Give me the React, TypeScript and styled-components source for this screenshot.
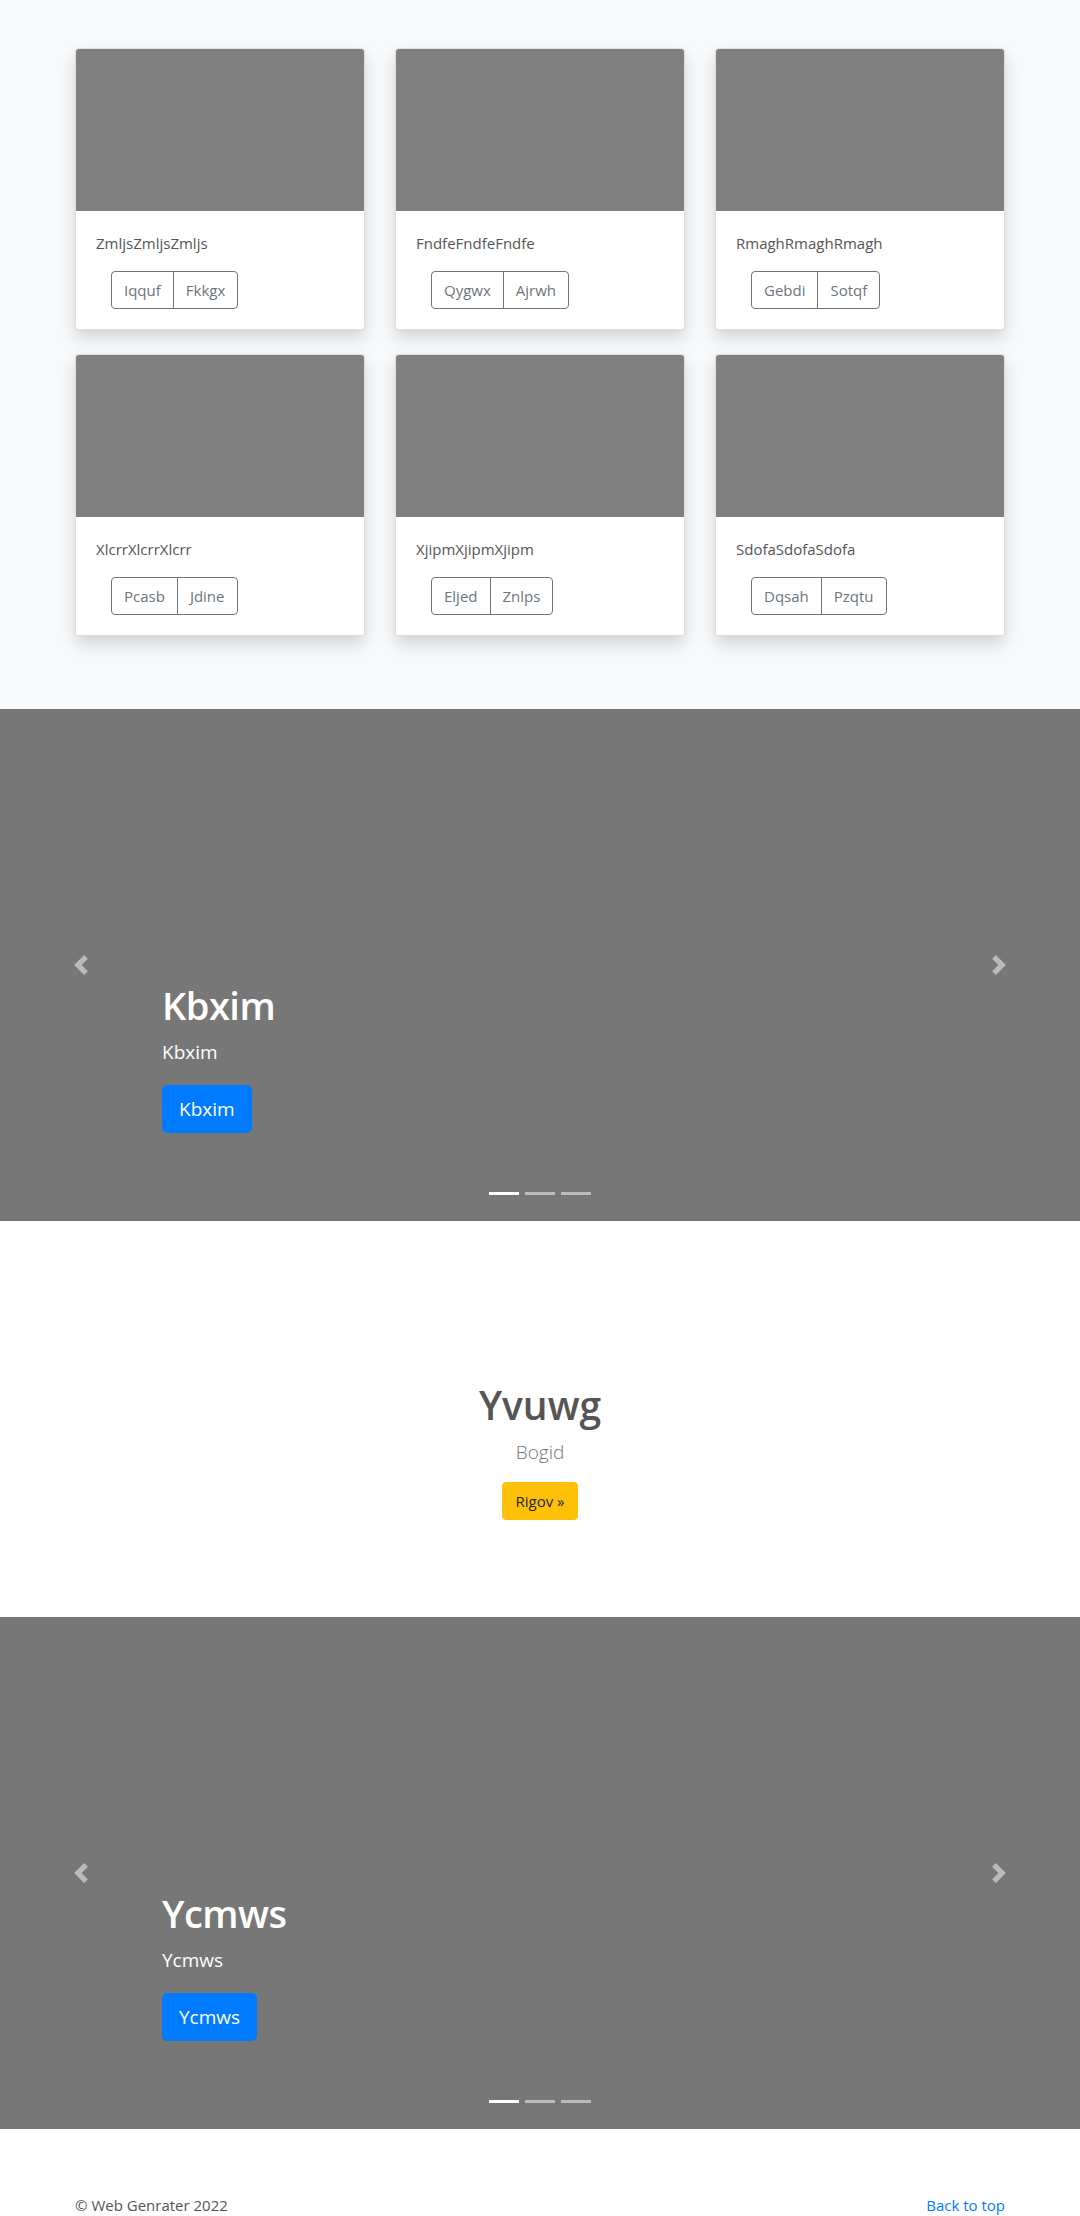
import styled, { createGlobalStyle } from 'styled-components'

const GlobalStyle = createGlobalStyle`
  body {
    margin: 0;
    font-family: "Open Sans", "Noto Sans", sans-serif;
    font-size: 16px;
    line-height: 1.5;
    color: #212529;
    background: #fff;
  }
  * {
    box-sizing: border-box;
  }
`

const Container = styled.div`
  width: 960px;
  margin: 0 auto;
  padding: 0 15px;
`

const AlbumSection = styled.section`
  background-color: #f8f9fa;
  padding: 48px 0 73px;
`

const CardGrid = styled.div`
  display: grid;
  grid-template-columns: repeat(3, 1fr);
  column-gap: 30px;
  row-gap: 24px;
`

const Card = styled.div`
  background: #fff;
  border: 1px solid rgba(0, 0, 0, 0.125);
  border-radius: 4px;
  overflow: hidden;
  box-shadow: 0 8px 16px rgba(0, 0, 0, 0.15);
`

const CardImage = styled.div`
  aspect-ratio: 16 / 9;
  background-color: #808080;
`

const CardBody = styled.div`
  padding: 20px;

  .card-text {
    margin: 0 0 16px;
    color: #555;
    font-size: 15px;
    line-height: 24px;
  }
`

const BtnGroup = styled.div`
  display: flex;
  margin-left: 15px;
`

const OutlineBtn = styled.button`
  font-family: inherit;
  font-size: 15px;
  line-height: 24px;
  padding: 6px 12px;
  color: #6c757d;
  background: transparent;
  border: 1px solid #6c757d;
  border-radius: 0;

  &:first-child {
    border-radius: 4px 0 0 4px;
  }
  &:last-child {
    margin-left: -1px;
    border-radius: 0 4px 4px 0;
  }
`

const Carousel = styled.section`
  position: relative;
  height: 512px;
  background-color: #777;
  overflow: hidden;
`

const Caption = styled.div`
  position: absolute;
  left: 15%;
  right: 15%;
  bottom: 88px;
  display: flex;
  flex-direction: column;
  align-items: flex-start;
  color: #fff;
  z-index: 10;

  h1 {
    margin: 0 0 8px;
    font-size: 38px;
    font-weight: 600;
    letter-spacing: -0.5px;
    line-height: 48px;
  }
  p {
    margin: 0 0 18px;
    font-size: 19px;
    line-height: 30px;
  }
`

const PrimaryBtn = styled.a`
  display: block;
  background-color: #007bff;
  color: #fff;
  font-size: 19px;
  line-height: 30px;
  padding: 8px 16px;
  border: 1px solid #007bff;
  border-radius: 5px;
  text-decoration: none;
`

const Control = styled.a<{ $side: 'left' | 'right' }>`
  position: absolute;
  top: 0;
  bottom: 0;
  ${({ $side }) => ($side === 'left' ? 'left: 0;' : 'right: 0;')}
  width: 15%;
  display: flex;
  align-items: center;
  justify-content: center;
  opacity: 0.5;

  svg {
    width: 20px;
    height: 20px;
  }
`

const Indicators = styled.ol`
  position: absolute;
  left: 0;
  right: 0;
  bottom: 0;
  margin: 0 15% 16px;
  padding: 0;
  list-style: none;
  display: flex;
  justify-content: center;
  z-index: 15;
`

const Indicator = styled.li<{ $active?: boolean }>`
  width: 30px;
  height: 3px;
  margin: 10px 3px;
  background-color: #fff;
  opacity: ${({ $active }) => ($active ? 1 : 0.5)};
`

const Hero = styled.section`
  display: flex;
  flex-direction: column;
  align-items: center;
  padding: 160px 0 97px;

  h1 {
    margin: 0 0 8px;
    font-size: 39px;
    font-weight: 600;
    line-height: 48px;
    color: #555;
  }
  .lead {
    margin: 0 0 15px;
    font-size: 19px;
    font-weight: 300;
    line-height: 30px;
    color: #6c757d;
  }
`

const WarningBtn = styled.a`
  display: block;
  background-color: #ffc107;
  border: 1px solid #ffc107;
  color: #212529;
  font-size: 15px;
  line-height: 24px;
  padding: 6px 12px;
  border-radius: 4px;
  text-decoration: none;
`

const Footer = styled.footer`
  padding: 64px 0 48px;
  color: #555;
  font-size: 15px;

  ${Container} {
    display: flex;
    justify-content: space-between;
  }
  p {
    margin: 0;
    line-height: 24px;
  }
  a {
    color: #007bff;
    text-decoration: none;
  }
`

const cards = [
  { title: 'ZmljsZmljsZmljs', buttons: ['Iqquf', 'Fkkgx'] },
  { title: 'FndfeFndfeFndfe', buttons: ['Qygwx', 'Ajrwh'] },
  { title: 'RmaghRmaghRmagh', buttons: ['Gebdi', 'Sotqf'] },
  { title: 'XlcrrXlcrrXlcrr', buttons: ['Pcasb', 'Jdine'] },
  { title: 'XjipmXjipmXjipm', buttons: ['Eljed', 'Znlps'] },
  { title: 'SdofaSdofaSdofa', buttons: ['Dqsah', 'Pzqtu'] },
]

function Chevron({ dir }: { dir: 'prev' | 'next' }) {
  return (
    <svg viewBox='0 0 8 8' fill='#fff'>
      {dir === 'prev' ? (
        <path d='M5.25 0l-4 4 4 4 1.5-1.5L4.25 4l2.5-2.5L5.25 0z' />
      ) : (
        <path d='M2.75 0l-1.5 1.5L3.75 4l-2.5 2.5L2.75 8l4-4-4-4z' />
      )}
    </svg>
  )
}

function Slider({ label }: { label: string }) {
  return (
    <Carousel>
      <Caption>
        <h1>{label}</h1>
        <p>{label}</p>
        <PrimaryBtn href='#'>{label}</PrimaryBtn>
      </Caption>
      <Control $side='left' href='#'>
        <Chevron dir='prev' />
      </Control>
      <Control $side='right' href='#'>
        <Chevron dir='next' />
      </Control>
      <Indicators>
        <Indicator $active />
        <Indicator />
        <Indicator />
      </Indicators>
    </Carousel>
  )
}

export default function App() {
  return (
    <>
      <GlobalStyle />
      <AlbumSection>
        <Container>
          <CardGrid>
            {cards.map((c) => (
              <Card key={c.title}>
                <CardImage />
                <CardBody>
                  <p className='card-text'>{c.title}</p>
                  <BtnGroup>
                    {c.buttons.map((b) => (
                      <OutlineBtn key={b} type='button'>
                        {b}
                      </OutlineBtn>
                    ))}
                  </BtnGroup>
                </CardBody>
              </Card>
            ))}
          </CardGrid>
        </Container>
      </AlbumSection>

      <Slider label='Kbxim' />

      <Hero>
        <h1>Yvuwg</h1>
        <p className='lead'>Bogid</p>
        <WarningBtn href='#'>Rigov »</WarningBtn>
      </Hero>

      <Slider label='Ycmws' />

      <Footer>
        <Container>
          <p>© Web Genrater 2022</p>
          <p>
            <a href='#'>Back to top</a>
          </p>
        </Container>
      </Footer>
    </>
  )
}
